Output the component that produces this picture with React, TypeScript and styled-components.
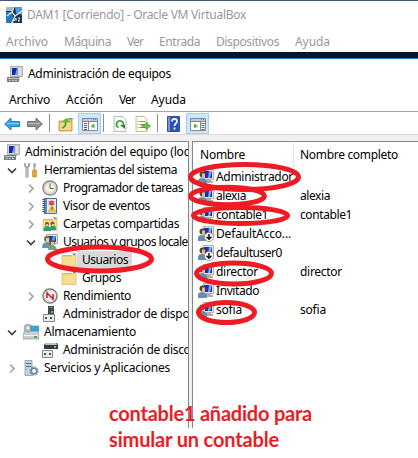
import React, { useLayoutEffect, useRef } from 'react';
import styled, { createGlobalStyle } from 'styled-components';

const Global = createGlobalStyle`
  * { box-sizing: border-box; }
  body { margin: 0; background: #fff; }
`;

const Screen = styled.div`
  position: relative;
  width: 418px;
  height: 458px;
  overflow: hidden;
  background: #fff;
  color: #000;
  font: 12px/18px 'Noto Sans', 'Open Sans', sans-serif;
`;

const Text = styled.span`
  display: inline-block;
  white-space: pre;
  flex: none;
`;

function Label({ children, w }: { children: string; w: number }) {
  const ref = useRef<HTMLSpanElement>(null);
  useLayoutEffect(() => {
    const el = ref.current;
    if (!el) return;
    el.style.letterSpacing = '0px';
    const natural = el.getBoundingClientRect().width;
    el.style.letterSpacing = `${(w - natural) / children.length}px`;
  }, [children, w]);
  return <Text ref={ref}>{children}</Text>;
}

const HostWindow = styled.header`
  height: 52px;
  border-top: 1px solid #43547b;
  color: #999;
`;
const HostTitle = styled.div`
  display: flex;
  align-items: center;
  height: 28px;
  padding: 0 0 0 6px;
  gap: 5px;
`;
const MenuBar = styled.nav<{ $x: number; $h: number }>`
  display: flex;
  align-items: center;
  height: ${p => p.$h}px;
  padding-left: ${p => p.$x}px;
  gap: 16px;
`;
const Desktop = styled.div`
  height: 7px;
  background: #04142b;
  border-bottom: 1px solid #1883d7;
`;
const TitleBar = styled.div`
  display: flex;
  align-items: center;
  height: 30px;
  padding-left: 7px;
  gap: 5px;
`;
const Toolbar = styled.div`
  display: flex;
  height: 24px;
  padding: 1px 0 0 3px;
  border-top: 1px solid #a5a5a5;
  border-bottom: 1px solid #dadada;
`;
const Tool = styled.span<{ $w: number; $on?: boolean }>`
  display: flex;
  align-items: center;
  justify-content: center;
  width: ${p => p.$w}px;
  height: 21px;
  padding-top: 1px;
  flex: none;
  background: ${p => (p.$on ? '#cce8ff' : 'transparent')};
  border: ${p => (p.$on ? '1px solid #99d1ff' : '0')};
`;
const Divider = styled.i<{ $before: number }>`
  width: 1px;
  height: 18px;
  margin: 1px 4px 0 ${p => p.$before}px;
  background: #8d8d8d;
  flex: none;
`;
const Panes = styled.main`
  display: flex;
  gap: 3px;
  height: 293px;
  padding-top: 6px;
  background: #f0f0f0;
`;
const Tree = styled.section`
  width: 189px;
  padding: 1px 0;
  overflow: hidden;
  background: #fff;
  border-top: 1px solid #828790;
  border-right: 1px solid #828790;
`;
const TreeRow = styled.div<{ $level: number }>`
  display: flex;
  align-items: center;
  height: 18px;
  padding-left: ${p => p.$level * 19 - 15}px;
`;
const Twisty = styled.span`
  display: flex;
  justify-content: center;
  width: 16px;
  margin-right: 3px;
  flex: none;
`;
const TreeIcon = styled.span`
  display: flex;
  width: 16px;
  flex: none;
`;
const TreeText = styled.span<{ $on?: boolean }>`
  display: flex;
  align-items: center;
  height: 18px;
  padding: 0 4px 0 5px;
  flex: none;
  background: ${p => (p.$on ? '#d9d9d9' : 'transparent')};
`;
const List = styled.section`
  flex: 1;
  background: #fff;
  border-top: 1px solid #828790;
  border-left: 1px solid #828790;
`;
const ListHead = styled.div`
  display: flex;
  align-items: center;
  height: 25px;
  padding: 1px 0 0 7px;
`;
const HeadCell = styled.div`
  display: flex;
  align-items: center;
  width: 94px;
  height: 24px;
  margin-right: 6px;
  border-right: 1px solid #e5e5e5;
`;
const ListRow = styled.div`
  display: flex;
  align-items: center;
  height: 19px;
  padding-left: 5px;
`;
const NameCell = styled.div`
  display: flex;
  align-items: center;
  width: 102px;
  gap: 2px;
`;
const Marks = styled.svg`
  position: absolute;
  inset: 0;
`;
const Note = styled.p`
  position: absolute;
  left: 109px;
  top: 400px;
  margin: 0;
  display: flex;
  flex-direction: column;
  align-items: flex-start;
  color: #ed1c24;
  font: 700 20px/26px Lato, 'Open Sans', sans-serif;
`;

const Svg = ({ children }: { children: React.ReactNode }) => (
  <svg width="16" height="16" viewBox="0 0 16 16">{children}</svg>
);

const VmIcon = () => (
  <Svg>
    <path fill="#203040" d="M0 0h16v16H0z" />
    <path fill="#a9b8c2" d="M0 0h7l-1 4H0z" />
    <path fill="#2779bd" d="M0 5h6l2 11H0z" />
    <path fill="#4a9bd8" d="M9 0h7v8l-6-2z" />
    <path fill="none" stroke="#d5f0ff" strokeWidth="1.3" d="M8 0 6 5l3 4 7-5M6 5 1 9M9 9l-3 7" />
    <path fill="none" stroke="#dfe8ee" d="m8 14 2-3v3m2-3h2l-2 3h2" />
  </Svg>
);
const ComputerIcon = () => (
  <Svg>
    <path fill="#d8d8d2" stroke="#8f9298" strokeWidth=".7" d="M3.500.5h12v10h-12z" />
    <path fill="#1428b8" d="M5 2h5v7H5z" />
    <path fill="#6f9df0" d="m10 2-2 7h3V2z" />
    <path fill="#e3e3dd" stroke="#a5a5a5" strokeWidth=".5" d="M11 1h4v9h-4z" />
    <path fill="#a8abae" d="M6 11h7v1H6z" />
    <path fill="#73828a" d="M0 11h12v5H0z" />
    <path fill="#bbc4c7" d="M1 12h10v1H1zM2 14h2v1H2zm3 0h2v1H5zm3 0h2v1H8z" />
  </Svg>
);
const Arrow = ({ right = false }) => (
  <Svg>
    <g transform={right ? 'matrix(-1 0 0 1 16 0)' : undefined}>
      <path
        fill={right ? '#929292' : '#35a8e4'}
        stroke={right ? '#686868' : '#1c75b3'}
        strokeWidth=".9"
        d="M.6 8 7 2v3.500h8.500v5H7V14z"
      />
      <path stroke={right ? '#bdbdbd' : '#7fd2f6'} d="M3 7.500h12" />
    </g>
  </Svg>
);
const UpFolder = () => (
  <Svg>
    <path fill="#e5c065" stroke="#b99343" strokeWidth=".8" d="M1 5h6l1-2h6v12H1z" />
    <path fill="#f3d98e" d="M2 7h11v7H2z" />
    <path fill="none" stroke="#3ba72d" strokeWidth="1.800" d="M4 12c4-1 4-4 3.500-7" />
    <path fill="#55bd38" d="m4 6 4-4 4 4z" />
    <path fill="#5ca4d4" d="M10 2h5v1h-5z" />
  </Svg>
);
const PaneIcon = ({ right = false }) => (
  <Svg>
    <path fill="#fff" stroke="#808895" d="M.5 2.500h15v12H.5z" />
    <path fill="#c6cbd4" d="M1 3h14v3H1z" />
    <path fill="#7d8593" d="M1 5h14v1H1zm10-2h1v1h-1zm2 0h1v1h-1z" />
    <path stroke="#7d8593" d={right ? 'M10.500 6v9' : 'M6.500 6v9'} />
    <path stroke="#4169a5" strokeDasharray="1 1" d={right ? 'M13 7v7' : 'M3.500 7v7'} strokeWidth="3" />
    <path fill="#4eb82e" d={right ? 'M4 7.500v5L8 10z' : 'M12.500 7.500v5L8.500 10z'} />
  </Svg>
);
const RefreshIcon = () => (
  <Svg>
    <path fill="#f9f9f7" stroke="#aaa" strokeWidth=".8" d="M2 .5h9l3 3v12H2z" />
    <path fill="none" stroke="#36a142" strokeWidth="1.800" d="M6.500 11.500A3.500 3.500 0 1 1 11 10" />
    <path fill="#228b35" d="M8 9h5v4z" />
  </Svg>
);
const ExportIcon = () => (
  <Svg>
    <path fill="#fffce7" stroke="#b8ac80" strokeWidth=".8" d="M1 .5h8l3 3v12H1z" />
    <path stroke="#8f8e78" strokeDasharray="1 1 6 20" d="M2.500 5.500h8M2.500 8.500h8M2.500 11.500h8" />
    <path fill="#66c447" stroke="#3b9b32" strokeWidth=".6" d="M7 8.500h4V6l4.500 4-4.500 4v-2.500H7z" />
  </Svg>
);
const HelpIcon = () => (
  <Svg>
    <path fill="#2b51bf" stroke="#203a8a" strokeWidth=".8" d="M1.500.5h12v15h-12z" />
    <path fill="#7891d7" d="M2 1h2v14H2z" />
    <path fill="none" stroke="#fff" strokeWidth="1.700" d="M6 5.500C6 2 11 2 11 5.500c0 2-2.500 2-2.500 4.500m0 1.500v2" />
  </Svg>
);
const ToolsIcon = () => (
  <Svg>
    <path fill="none" stroke="#8d9295" strokeWidth="1.500" d="M2 1v3l2 2 2-2V1" />
    <path stroke="#8d9295" strokeWidth="3" d="M4 6v9.500" />
    <path stroke="#e3e6e6" d="M4 6v9" />
    <path fill="#a8acb0" d="M10.500 1h2l.5 2-1 5h-1l-1-5z" />
    <path fill="#e0aa22" stroke="#b88018" strokeWidth=".5" d="M9.500 8h4v7h-4z" />
  </Svg>
);
const ClockIcon = () => (
  <Svg>
    <circle cx="8" cy="8" r="7.200" fill="#d9dee1" stroke="#777d81" strokeWidth="1.200" />
    <circle cx="8" cy="8" r="5.400" fill="#fbf2d9" stroke="#aaa" strokeWidth=".5" />
    <path fill="none" stroke="#536777" d="M8 3.500V8.500h3.500" />
  </Svg>
);
const EventIcon = () => (
  <Svg>
    <path fill="#e4ebf7" stroke="#406da5" d="M2.500.5h12v15h-12z" />
    <path fill="#6089c2" d="M3 1h2v14H3z" />
    <path stroke="#444" strokeDasharray="1 1" d="M1.500 1v14" strokeWidth="2" />
    <path stroke="#9db2d2" d="M6 3.500h7M6 6.500h7" />
    <circle cx="9.500" cy="5" r="2.500" fill="#d94b3d" />
    <path fill="#f6c72d" stroke="#c69517" strokeWidth=".4" d="m10 7 4 7H6z" />
    <path stroke="#765414" d="M10 9v3" />
  </Svg>
);
const FolderIcon = ({ shared = false }) => (
  <Svg>
    <path fill="#e3bb58" d="M1 3h9l1-2h4v13H1z" />
    <path fill="#f8dc91" stroke="#d6ad4d" strokeWidth=".6" d="M1 4h9l1-1h4v11.500H1z" />
    <path fill="#fff" d="M10 2h4v1h-4z" />
    <path fill="#4c99d5" d="M12 2h2v1h-2z" />
    {shared && (
      <g>
        <circle cx="5" cy="8" r="2" fill="#6d5028" />
        <circle cx="10.500" cy="7.500" r="2" fill="#795b2b" />
        <path fill="#299c83" d="M1.500 15q0-5 3.500-5t4 5zM8 14q0-5 3-5t3 5z" />
        <path fill="#eac29a" d="M4 8h2v2H4zm6 0h2v2h-2z" />
      </g>
    )}
  </Svg>
);
const UsersIcon = () => (
  <Svg>
    <path fill="#e6e5da" stroke="#aaa89c" d="M4.500.5h11v9h-11z" />
    <path fill="#173ac2" d="M6 2h8v6H6z" />
    <path fill="#6798e8" d="m11 2-2 6h3l2-6z" />
    <circle cx="5" cy="5" r="3" fill="#78694e" />
    <path fill="#edc7a0" d="M4 4h3v4H4z" />
    <path fill="#6494b7" d="M0 14q0-6 5-6t5 6z" />
    <circle cx="10" cy="9" r="2.800" fill="#6d563b" />
    <path fill="#eac19d" d="M9 8h3v3H9z" />
    <path fill="#6fa77d" d="M6 16q0-5 4-5t5 5z" />
  </Svg>
);
const GaugeIcon = () => (
  <Svg>
    <circle cx="8" cy="8" r="7" fill="#fff" stroke="#777" strokeWidth="1.400" />
    <circle cx="8" cy="8" r="5.300" fill="#f7f7f7" stroke="#bbb" strokeWidth=".6" />
    <path fill="none" stroke="#d32222" strokeWidth="1.600" d="M5 10V5l6 6V6" />
  </Svg>
);
const DeviceIcon = () => (
  <Svg>
    <path fill="#42484c" d="M6 0h6v9H6z" />
    <path fill="#7c858a" d="M7 1h4v1H7z" />
    <path fill="#61cf59" d="M9 5h2v2H9z" />
    <path fill="#ebecec" stroke="#84898c" d="M1.500 8.500h11v7h-11z" />
    <path fill="#465158" d="M3 11h2v2H3zm5 0h2v2H8z" />
  </Svg>
);
const StorageIcon = () => (
  <Svg>
    <path fill="#c8d0d3" stroke="#7b888e" strokeWidth=".6" d="M0 11 2 6h12l2 5v4H0z" />
    <path fill="#f3f4f4" d="M1 11h14v1H1z" />
    <circle cx="5" cy="4" r="4" fill="#b5bdc1" stroke="#888" strokeWidth=".5" />
    <circle cx="5" cy="4" r="1.300" fill="#fff" />
    <path fill="#38a8db" stroke="#427a9a" strokeWidth=".6" d="M8 2h8v5H8z" />
    <path fill="#4ca83e" d="M11 12h3v2h-3z" />
  </Svg>
);
const DiskIcon = () => (
  <Svg>
    <path fill="#363c3e" d="M2 3 4 1h11l1 2v4H2z" />
    <path fill="#bac1c4" d="M4 1h10l1 2H3z" />
    <path fill="#54d54b" d="M12 4h2v2h-2z" />
    <path fill="#ebecec" stroke="#84898c" d="M.5 8.500h10v7H.5z" />
    <path fill="#465158" d="M2 11h2v2H2zm5 0h2v2H7z" />
  </Svg>
);
const ServicesIcon = () => (
  <Svg>
    <path fill="#c5d4da" stroke="#8a9ba3" strokeWidth=".8" d="M2 .5h7v15H2z" />
    <path stroke="#536d79" d="M3 3.500h5M3 6.500h5" />
    <path fill="#59b950" d="M3 9h1v1H3z" />
    <circle cx="11" cy="11" r="2.800" fill="#fff" stroke="#6689a7" strokeWidth="1.800" />
    <circle cx="11" cy="11" r="4.300" fill="none" stroke="#6689a7" strokeDasharray="1.690 1.690" />
  </Svg>
);
const UserIcon = ({ disabled = false }) => (
  <Svg>
    <path fill="#e5e3d5" stroke="#9c9b91" strokeWidth=".7" d="M5 .5h10.500v10H5z" />
    <path fill="#172fc0" d="M6 2h8v7H6z" />
    <path fill="#7ba8f4" d="m11 2-1 7h2l2-7z" />
    <path fill="#adada5" d="M8 11h5v1h2v2H8z" />
    <circle cx="4.500" cy="5.500" r="3" fill="#5a4229" />
    <path fill="#e9b78c" d="M4 4.500h3v4.500H4z" />
    <path fill="#638eaf" d="M0 15V11q1-2 4-2t5 3v3z" />
    {disabled && (
      <g>
        <circle cx="11" cy="11" r="4.600" fill="#fff" stroke="#777" strokeWidth=".7" />
        <path fill="none" stroke="#111" strokeWidth="1.500" d="M11 8v5m-2.500-2.200 2.500 2.500 2.500-2.500" />
      </g>
    )}
  </Svg>
);
const Chevron = ({ open }: { open: boolean }) => (
  <svg width="10" height="10" viewBox="0 0 10 10">
    <path
      fill="none"
      stroke={open ? '#404040' : '#a3a3a3'}
      strokeWidth="1.700"
      d={open ? 'm1 3.500 4 4 4-4' : 'm3 1.500 4 4-4 4'}
    />
  </svg>
);

type Node = { level: number; text: string; w: number; icon: React.ReactNode; open?: boolean; on?: boolean };
const tree: Node[] = [
  { level: 0, text: 'Administración del equipo (local)', w: 177, icon: <ComputerIcon /> },
  { level: 1, text: 'Herramientas del sistema', w: 133, icon: <ToolsIcon />, open: true },
  { level: 2, text: 'Programador de tareas', w: 120, icon: <ClockIcon />, open: false },
  { level: 2, text: 'Visor de eventos', w: 87, icon: <EventIcon />, open: false },
  { level: 2, text: 'Carpetas compartidas', w: 116, icon: <FolderIcon shared />, open: false },
  { level: 2, text: 'Usuarios y grupos locales', w: 130, icon: <UsersIcon />, open: true },
  { level: 3, text: 'Usuarios', w: 46, icon: <FolderIcon />, on: true },
  { level: 3, text: 'Grupos', w: 39, icon: <FolderIcon /> },
  { level: 2, text: 'Rendimiento', w: 68, icon: <GaugeIcon />, open: false },
  { level: 2, text: 'Administrador de dispositivos', w: 160, icon: <DeviceIcon /> },
  { level: 1, text: 'Almacenamiento', w: 92, icon: <StorageIcon />, open: true },
  { level: 2, text: 'Administración de discos', w: 133, icon: <DiskIcon /> },
  { level: 1, text: 'Servicios y Aplicaciones', w: 126, icon: <ServicesIcon />, open: false },
];

type User = { name: string; w: number; full?: string; disabled?: boolean };
const users: User[] = [
  { name: 'Administrador', w: 77 },
  { name: 'alexia', w: 30, full: 'alexia' },
  { name: 'contable1', w: 52, full: 'contable1' },
  { name: 'DefaultAcco...', w: 75, disabled: true },
  { name: 'defaultuser0', w: 66, disabled: true },
  { name: 'director', w: 42, full: 'director' },
  { name: 'Invitado', w: 43 },
  { name: 'sofia', w: 26, full: 'sofia' },
];

export default function App() {
  return (
    <Screen>
      <Global />
      <HostWindow>
        <HostTitle>
          <VmIcon />
          <Label w={219}>DAM1 [Corriendo] - Oracle VM VirtualBox</Label>
        </HostTitle>
        <MenuBar $x={6} $h={25}>
          <Label w={42}>Archivo</Label>
          <Label w={47}>Máquina</Label>
          <Label w={16}>Ver</Label>
          <Label w={41}>Entrada</Label>
          <Label w={63}>Dispositivos</Label>
          <Label w={35}>Ayuda</Label>
        </MenuBar>
      </HostWindow>
      <Desktop />
      <TitleBar>
        <ComputerIcon />
        <Label w={143}>Administración de equipos</Label>
      </TitleBar>
      <MenuBar $x={9} $h={22}>
        <Label w={41}>Archivo</Label>
        <Label w={37}>Acción</Label>
        <Label w={16}>Ver</Label>
        <Label w={35}>Ayuda</Label>
      </MenuBar>
      <Toolbar>
        <Tool $w={18}><Arrow /></Tool>
        <Tool $w={4} />
        <Tool $w={19}><Arrow right /></Tool>
        <Divider $before={5} />
        <Tool $w={24}><UpFolder /></Tool>
        <Tool $w={23} $on><PaneIcon /></Tool>
        <Divider $before={2} />
        <Tool $w={24}><RefreshIcon /></Tool>
        <Tool $w={22}><ExportIcon /></Tool>
        <Divider $before={3} />
        <Tool $w={24}><HelpIcon /></Tool>
        <Tool $w={23} $on><PaneIcon right /></Tool>
      </Toolbar>
      <Panes>
        <Tree>
          {tree.map(n => (
            <TreeRow key={n.text} $level={n.level || 1}>
              {n.level > 0 && <Twisty>{n.open !== undefined && <Chevron open={n.open} />}</Twisty>}
              <TreeIcon>{n.icon}</TreeIcon>
              <TreeText $on={n.on}><Label w={n.w}>{n.text}</Label></TreeText>
            </TreeRow>
          ))}
        </Tree>
        <List>
          <ListHead>
            <HeadCell><Label w={45}>Nombre</Label></HeadCell>
            <Label w={98}>Nombre completo</Label>
          </ListHead>
          {users.map(u => (
            <ListRow key={u.name}>
              <NameCell>
                <UserIcon disabled={u.disabled} />
                <Label w={u.w}>{u.name}</Label>
              </NameCell>
              {u.full && <Label w={u.w}>{u.full}</Label>}
            </ListRow>
          ))}
        </List>
      </Panes>
      <Marks width="418" height="458" fill="none" stroke="#ed1c24" strokeWidth="5">
        <ellipse cx="244.500" cy="177" rx="54" ry="12.500" />
        <ellipse cx="227.500" cy="196" rx="37" ry="8.700" />
        <ellipse cx="240.500" cy="215.500" rx="47" ry="8" />
        <ellipse cx="234" cy="273.500" rx="37.500" ry="10.500" />
        <ellipse cx="226.500" cy="312.500" rx="28" ry="10" />
        <ellipse cx="99.500" cy="259" rx="52" ry="12" />
      </Marks>
      <Note>
        <Label w={203}>contable1 añadido para</Label>
        <Label w={170}>simular un contable</Label>
      </Note>
    </Screen>
  );
}
